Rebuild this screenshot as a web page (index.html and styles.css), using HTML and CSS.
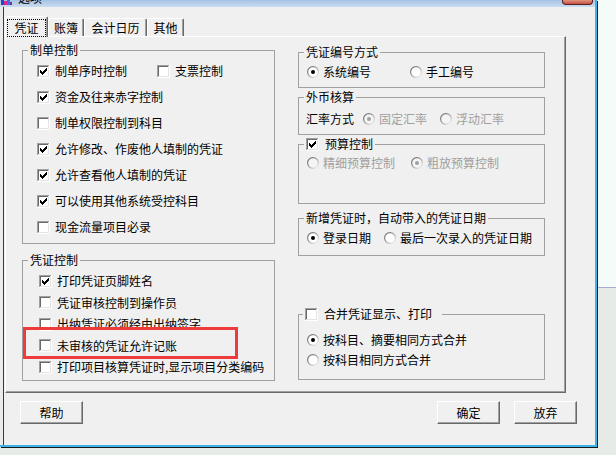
FILE: index.html
```html
<!DOCTYPE html>
<html lang="zh-CN">
<head>
<meta charset="utf-8">
<title>选项</title>
<link rel="stylesheet" href="styles.css">
</head>
<body>
<svg class="defs" width="0" height="0" aria-hidden="true">
  <defs>
    <linearGradient id="sunk" x1="0" y1="0" x2="1" y2="1">
      <stop offset="0" stop-color="#5f5f5f"/>
      <stop offset="0.55" stop-color="#a8a8a8"/>
      <stop offset="1" stop-color="#ffffff"/>
    </linearGradient>
    <symbol id="box" viewBox="0 0 13 13">
      <rect x="0" y="0" width="13" height="13" fill="#ffffff"/>
      <rect x="0" y="0" width="12" height="12" fill="#a0a0a0"/>
      <rect x="1" y="1" width="11" height="11" fill="#e3e3e3"/>
      <rect x="1" y="1" width="10" height="10" fill="#696969"/>
      <rect x="2" y="2" width="9" height="9" fill="#ffffff"/>
    </symbol>
    <symbol id="tick" viewBox="0 0 13 13">
      <rect x="3" y="5" width="1" height="3" fill="#000"/>
      <rect x="4" y="6" width="1" height="3" fill="#000"/>
      <rect x="5" y="7" width="1" height="3" fill="#000"/>
      <rect x="6" y="6" width="1" height="3" fill="#000"/>
      <rect x="7" y="5" width="1" height="3" fill="#000"/>
      <rect x="8" y="4" width="1" height="3" fill="#000"/>
      <rect x="9" y="3" width="1" height="3" fill="#000"/>
    </symbol>
    <symbol id="ring" viewBox="0 0 12 12">
      <circle cx="6" cy="6" r="5.4" fill="#ffffff" stroke="url(#sunk)" stroke-width="1.2"/>
    </symbol>
    <symbol id="ringoff" viewBox="0 0 12 12">
      <circle cx="6" cy="6" r="5.4" fill="#f4f4f4" stroke="url(#sunk)" stroke-width="1.2"/>
    </symbol>
  </defs>
</svg>

<div class="window">
  <div class="titlebar">
    <svg class="appicon" width="13" height="6" viewBox="0 0 13 6">
      <rect x="1" y="0" width="3" height="5" fill="#2a43c8"/>
      <rect x="4" y="1" width="3" height="4" fill="#d42a8c"/>
      <rect x="7" y="0" width="3" height="5" fill="#3b6fe0"/>
      <rect x="10" y="2" width="2" height="3" fill="#7a2ab8"/>
    </svg>
    <span class="title">选项</span>
    <span class="close"></span>
  </div>

  <div class="client">
    <div class="tabs">
      <div class="tab active"><span class="focus">凭证</span></div>
      <div class="tab w36">账簿</div>
      <div class="tab w63">会计日历</div>
      <div class="tab w37">其他</div>
    </div>

    <div class="panel">
      <div class="col left">
        <fieldset class="grp g-zd">
          <legend>制单控制</legend>
          <div class="gbody">
            <div class="row r26">
              <span class="item w120"><svg class="cb"><use href="#box"/><use href="#tick"/></svg>制单序时控制</span>
              <span class="item"><svg class="cb"><use href="#box"/></svg>支票控制</span>
            </div>
            <div class="row r26"><span class="item"><svg class="cb"><use href="#box"/><use href="#tick"/></svg>资金及往来赤字控制</span></div>
            <div class="row r26"><span class="item"><svg class="cb"><use href="#box"/></svg>制单权限控制到科目</span></div>
            <div class="row r26"><span class="item"><svg class="cb"><use href="#box"/><use href="#tick"/></svg>允许修改、作废他人填制的凭证</span></div>
            <div class="row r26"><span class="item"><svg class="cb"><use href="#box"/><use href="#tick"/></svg>允许查看他人填制的凭证</span></div>
            <div class="row r26"><span class="item"><svg class="cb"><use href="#box"/><use href="#tick"/></svg>可以使用其他系统受控科目</span></div>
            <div class="row r26"><span class="item"><svg class="cb"><use href="#box"/></svg>现金流量项目必录</span></div>
          </div>
        </fieldset>

        <fieldset class="grp g-pz">
          <legend>凭证控制</legend>
          <div class="gbody">
            <div class="row r21"><span class="item"><svg class="cb"><use href="#box"/><use href="#tick"/></svg>打印凭证页脚姓名</span></div>
            <div class="row r21"><span class="item"><svg class="cb"><use href="#box"/></svg>凭证审核控制到操作员</span></div>
            <div class="row r21"><span class="item"><svg class="cb"><use href="#box"/></svg>出纳凭证必须经由出纳签字</span></div>
            <div class="row r21"><span class="item"><svg class="cb"><use href="#box"/></svg>未审核的凭证允许记账</span></div>
            <div class="row r21"><span class="item"><svg class="cb"><use href="#box"/></svg>打印项目核算凭证时,显示项目分类编码</span></div>
          </div>
        </fieldset>
      </div>

      <div class="col right">
        <fieldset class="grp g-bh">
          <legend>凭证编号方式</legend>
          <div class="gbody">
            <div class="row r20">
              <span class="item rd w103"><svg class="rb"><use href="#ring"/><circle cx="6" cy="6" r="2" fill="#000"/></svg>系统编号</span>
              <span class="item rd"><svg class="rb"><use href="#ring"/></svg>手工编号</span>
            </div>
          </div>
        </fieldset>

        <fieldset class="grp g-wb">
          <legend>外币核算</legend>
          <div class="gbody">
            <div class="row r20">
              <span class="lbl">汇率方式</span>
              <span class="item rd off w77"><svg class="rb"><use href="#ringoff"/><circle cx="6" cy="6" r="2" fill="#a0a0a0"/></svg>固定汇率</span>
              <span class="item rd off"><svg class="rb"><use href="#ringoff"/></svg>浮动汇率</span>
            </div>
          </div>
        </fieldset>

        <fieldset class="grp g-ys">
          <legend><span class="lg"><svg class="cb"><use href="#box"/><use href="#tick"/></svg>预算控制</span></legend>
          <div class="gbody">
            <div class="row r20">
              <span class="item rd off w104"><svg class="rb"><use href="#ringoff"/></svg>精细预算控制</span>
              <span class="item rd off"><svg class="rb"><use href="#ringoff"/><circle cx="6" cy="6" r="2" fill="#a0a0a0"/></svg>粗放预算控制</span>
            </div>
          </div>
        </fieldset>

        <fieldset class="grp g-rq">
          <legend>新增凭证时，自动带入的凭证日期</legend>
          <div class="gbody">
            <div class="row r20">
              <span class="item rd w77"><svg class="rb"><use href="#ring"/><circle cx="6" cy="6" r="2" fill="#000"/></svg>登录日期</span>
              <span class="item rd"><svg class="rb"><use href="#ring"/></svg>最后一次录入的凭证日期</span>
            </div>
          </div>
        </fieldset>

        <fieldset class="grp g-hb">
          <legend class="wide"><span class="lg"><svg class="cb"><use href="#box"/></svg>合并凭证显示、打印</span></legend>
          <div class="gbody">
            <div class="row r20"><span class="item rd"><svg class="rb"><use href="#ring"/><circle cx="6" cy="6" r="2" fill="#000"/></svg>按科目、摘要相同方式合并</span></div>
            <div class="row r20"><span class="item rd"><svg class="rb"><use href="#ring"/></svg>按科目相同方式合并</span></div>
          </div>
        </fieldset>
      </div>
    </div>

    <div class="btnrow">
      <button class="btn">帮助</button>
      <span class="spacer"></span>
      <button class="btn">确定</button>
      <button class="btn">放弃</button>
    </div>
  </div>
</div>

<div class="mark"></div>
</body>
</html>
```

FILE: styles.css
```css
* { box-sizing: border-box; }

html, body { margin: 0; padding: 0; }

body {
  width: 616px;
  height: 455px;
  overflow: hidden;
  position: relative;
  font-family: "Noto Sans CJK SC", "Noto Sans", sans-serif;
  font-size: 12px;
  color: #000;
  background: linear-gradient(#f5fbf8 0, #f5fbf8 287px, #a9a9d6 287px, #a9a9d6 288px, #e6ebe7 288px);
}

.defs { position: absolute; width: 0; height: 0; }

.window {
  width: 597px;
  height: 447px;
  display: flex;
  flex-direction: column;
  border-right: 2px solid #3cb4e6;
  border-bottom: 2px solid #3cb4e6;
  box-shadow: 1px 1px 0 #1b1b1b;
  background: #ebebeb;
}

/* title bar (only its lower edge is visible) */
.titlebar {
  height: 7px;
  flex: none;
  display: flex;
  align-items: flex-start;
  overflow: hidden;
  background: linear-gradient(#a6c3e5, #c9dcf1);
}
.appicon { flex: none; margin-left: 0; display: block; }
.title {
  margin-left: 5px;
  margin-top: -9px;
  line-height: 14px;
  font-size: 12px;
  color: #000;
}
.close {
  margin-left: auto;
  margin-right: 2px;
  width: 31px;
  height: 5px;
  border: 1px solid #5c1f1f;
  border-top: none;
  border-radius: 0 0 4px 4px;
  background: linear-gradient(#e09582, #c4503f);
}

/* client area */
.client {
  flex: 1;
  margin-left: 3px;
  border-left: 1px solid #3a3a3a;
  background: #f0f0f0;
  padding-top: 9px;
  display: flex;
  flex-direction: column;
}

/* tabs */
.tabs {
  display: flex;
  align-items: flex-end;
  height: 20px;
  margin-left: 1px;
  position: relative;
  z-index: 1;
}
.tab {
  height: 18px;
  border: 1px solid;
  border-color: #fff #696969 transparent #fff;
  border-bottom: none;
  border-radius: 2px 2px 0 0;
  box-shadow: inset -1px 0 0 #a0a0a0;
  padding-top: 2px;
  line-height: 14px;
  text-align: center;
  background: #f0f0f0;
  white-space: nowrap;
}
.tab.active {
  width: 43px;
  height: 21px;
  margin-bottom: -1px;
  padding-top: 3px;
}
.focus {
  display: inline-block;
  padding: 1px 6px;
  outline: 1px dotted #000;
  outline-offset: 0;
  line-height: 14px;
}
.w36 { width: 36px; }
.w63 { width: 63px; }
.w37 { width: 37px; }

/* tab panel */
.panel {
  margin-left: 1px;
  width: 561px;
  border: 1px solid;
  border-color: #fff #696969 #696969 #fff;
  box-shadow: inset -1px -1px 0 #a0a0a0;
  padding: 6px 20px 11px 16px;
  display: flex;
  gap: 23px;
  align-items: flex-start;
}
.col { display: flex; flex-direction: column; }
.col.left { width: 253px; }
.col.right { width: 247px; margin-top: 2px; }

/* group boxes */
.grp {
  margin: 0;
  padding: 0;
  border: 1px solid #a0a0a0;
  min-width: 0;
}
.grp legend {
  margin-left: 5px;
  padding: 0 2px;
  line-height: 14px;
  height: 14px;
  white-space: nowrap;
}
.grp legend.wide { padding-right: 10px; margin-left: 4px; }
.lg {
  display: inline-flex;
  align-items: center;
  gap: 6px;
  height: 14px;
}

.gbody { display: flex; flex-direction: column; }

.g-zd .gbody { padding: 1px 0 3px 14px; }
.g-pz { margin-top: 9px; }
.g-pz .gbody { padding: 3.25px 0 2.25px 16px; }

.g-bh .gbody { padding: 3px 0 5px 8px; }
.g-wb { margin-top: 2px; }
.g-wb .gbody { padding: 5px 0 5px 7px; }
.g-ys { margin-top: 2px; }
.g-ys .gbody { padding: 2px 0 30px 8px; }
.g-rq { margin-top: 7px; }
.g-rq .gbody { padding: 3px 0 7px 8px; }
.g-hb { margin-top: 51px; }
.g-hb .gbody { padding: 9px 0 9px 8px; }

.row {
  display: flex;
  align-items: center;
  white-space: nowrap;
  line-height: 14px;
}
.r26 { height: 26px; }
.r21 { height: 21.5px; }
.r20 { height: 20px; }

.item {
  display: inline-flex;
  align-items: center;
  gap: 5px;
}
.item.rd { gap: 4px; }
.item.off { color: #a0a0a0; }
.lbl { margin-right: 9px; }

.w120 { width: 120px; }
.w103 { width: 103px; }
.w104 { width: 104px; }
.w77 { width: 77px; }

.cb { width: 13px; height: 13px; flex: none; display: block; }
.rb { width: 12px; height: 12px; flex: none; display: block; }

/* buttons */
.btnrow {
  display: flex;
  gap: 14px;
  margin-top: 8px;
  padding: 0 18px 0 16px;
}
.spacer { flex: 1; }
.btn {
  width: 63px;
  height: 23px;
  margin: 0;
  padding: 0;
  border: 1px solid;
  border-color: #fff #696969 #696969 #fff;
  box-shadow: inset -1px -1px 0 #a0a0a0;
  background: #f0f0f0;
  font-family: inherit;
  font-size: 12px;
  line-height: 14px;
  color: #000;
  border-radius: 0;
}

/* red annotation box drawn over the dialog */
.mark {
  position: absolute;
  left: 23px;
  top: 327px;
  width: 215px;
  height: 32px;
  border: 3px solid #ee3b3b;
  pointer-events: none;
}
```
